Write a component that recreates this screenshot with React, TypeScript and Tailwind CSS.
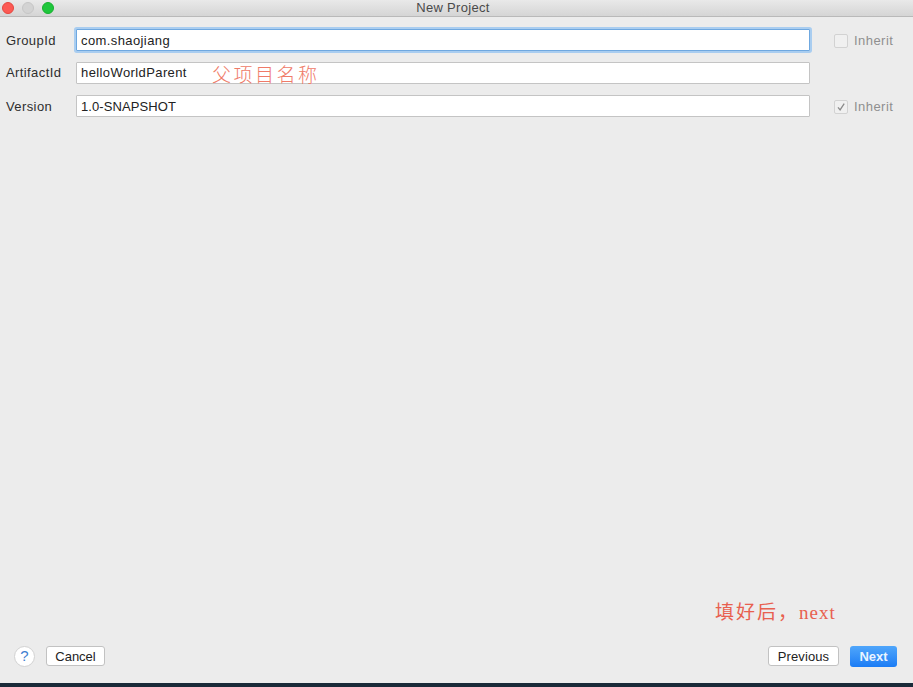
import React from "react";

function Row({ label, value, focused, inherit, checked, offset, tight }: { label: string; value: string; focused?: boolean; inherit?: boolean; checked?: boolean; offset?: boolean; tight?: boolean }) {
  return (
    <div className="flex items-center h-[22px]">
      <div className={offset ? "w-[70px] shrink-0 pt-[1px] text-[13px] tracking-[0.4px] text-[#2e2e2e]" : "w-[70px] shrink-0 text-[13px] tracking-[0.4px] text-[#2e2e2e]"}>{label}</div>
      <div
        className={
          focused
            ? "w-[734px] h-[22px] shrink-0 flex items-center pl-[4px] pt-[1px] bg-white border border-[#6fa8e0] shadow-[0_0_0_2px_#a9cdf0] text-[13px] tracking-[0.4px] text-[#222] rounded-[1px]"
            : tight
            ? "w-[734px] h-[22px] shrink-0 flex items-center pl-[4px] pt-[1px] bg-white border border-[#c4c4c4] text-[13px] tracking-[0.1px] text-[#222] rounded-[1px]"
            : "w-[734px] h-[22px] shrink-0 flex items-center pl-[4px] bg-white border border-[#c4c4c4] text-[13px] tracking-[0.4px] text-[#222] rounded-[1px]"
        }
      >
        {value}
      </div>
      {inherit && (
        <div className="flex items-center ml-[24px] pt-[1px] text-[13px] tracking-[0.45px] text-[#8f8f8f]">
          <div className="w-[14px] h-[14px] border border-[#d2d2d2] bg-[#f0f0f0] rounded-[2px] flex items-center justify-center mr-[6px]">
            {checked && (
              <svg width="12" height="12" viewBox="0 0 12 12" fill="none">
                <path d="M3 6.3 L5.1 8.8 L9.2 2.6" stroke="#8a8a8a" strokeWidth="1.3" />
              </svg>
            )}
          </div>
          Inherit
        </div>
      )}
    </div>
  );
}

export default function App() {
  return (
    <div className="relative w-[913px] h-[687px] flex flex-col bg-[#ececec] overflow-hidden font-['Liberation_Sans','Noto_Sans_CJK_SC',sans-serif]">
      <div className="relative h-[17px] shrink-0 flex items-center pl-[2px] gap-[8px] bg-gradient-to-b from-[#e9e9e9] to-[#d5d5d5] border-b border-[#b9b9b9]">
        <div className="w-[12px] h-[12px] rounded-full bg-[#fc5a54] border border-[#e5473f]" />
        <div className="w-[12px] h-[12px] rounded-full bg-[#d3d3d3] border border-[#c6c6c6]" />
        <div className="w-[12px] h-[12px] rounded-full bg-[#1fc63c] border border-[#17b02f]" />
        <div className="absolute inset-x-0 top-0 h-[15px] pr-[7px] flex items-center justify-center text-[13px] tracking-[0.3px] text-[#4a4a4a]">New Project</div>
      </div>

      <div className="flex-1 flex flex-col gap-[11px] pt-[12px] pl-[6px]">
        <Row label="GroupId" value="com.shaojiang" focused inherit offset />
        <Row label="ArtifactId" value="helloWorldParent" />
        <Row label="Version" value="1.0-SNAPSHOT" inherit checked offset tight />
      </div>

      <div className="flex items-center justify-between h-[22px] pl-[14px] pr-[16px] mb-[16px] shrink-0">
        <div className="flex items-center gap-[11px]">
          <div className="w-[21px] h-[21px] rounded-full bg-white border border-[#d2d2d2] flex items-center justify-center text-[15px] text-[#3f7fd0]">?</div>
          <div className="w-[59px] h-[20px] pt-[1px] bg-white border border-[#c2c2c2] rounded-[3px] flex items-center justify-center text-[13px] text-[#222]">Cancel</div>
        </div>
        <div className="flex items-center gap-[11px]">
          <div className="w-[71px] h-[20px] pt-[1px] bg-white border border-[#c2c2c2] rounded-[3px] flex items-center justify-center text-[13px] tracking-[0.1px] text-[#222]">Previous</div>
          <div className="w-[47px] h-[21px] pt-[1px] bg-gradient-to-b from-[#4fa6fb] to-[#1a7cf5] rounded-[3px] flex items-center justify-center text-[13px] font-bold text-[#eaf4ff]">Next</div>
        </div>
      </div>

      <div className="h-[4px] shrink-0 bg-[#1a2a38]" />

      <div className="absolute left-[212px] top-[60px] text-[19px] tracking-[2.5px] text-[#ef7a68] font-['Noto_Sans_CJK_SC',serif] font-light">父项目名称</div>
      <div className="absolute left-[715px] top-[599px] text-[19px] tracking-[2px] text-[#e8604f] font-['Liberation_Serif','Noto_Sans_CJK_SC',serif]">
        填好后，<span className="tracking-[1px]">next</span>
      </div>
    </div>
  );
}
